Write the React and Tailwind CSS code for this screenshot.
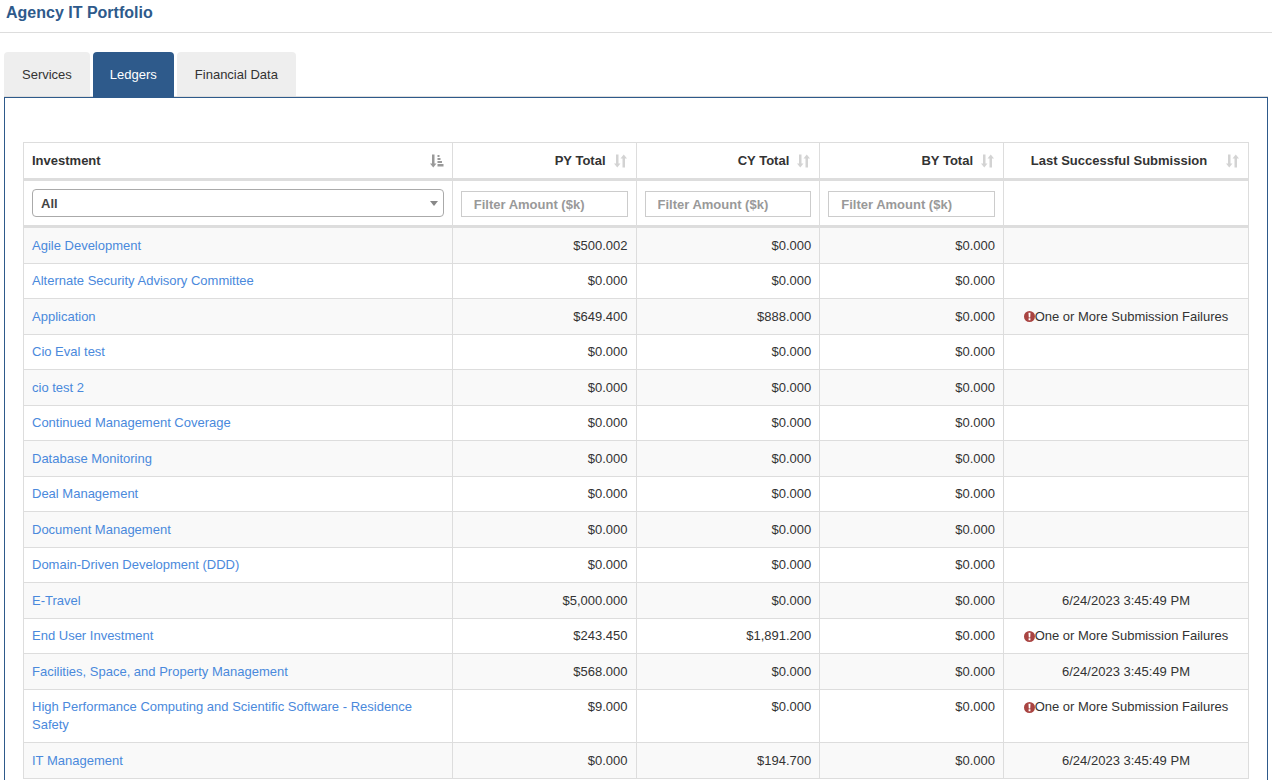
import React, { useState } from "react";

const tabs = ["Services", "Ledgers", "Financial Data"];

const FAILED = "failed";
const SUBMITTED = "6/24/2023 3:45:49 PM";

const investments = [
  { name: "Agile Development", py: "$500.002", cy: "$0.000", by: "$0.000" },
  { name: "Alternate Security Advisory Committee", py: "$0.000", cy: "$0.000", by: "$0.000" },
  { name: "Application", py: "$649.400", cy: "$888.000", by: "$0.000", submission: FAILED },
  { name: "Cio Eval test", py: "$0.000", cy: "$0.000", by: "$0.000" },
  { name: "cio test 2", py: "$0.000", cy: "$0.000", by: "$0.000" },
  { name: "Continued Management Coverage", py: "$0.000", cy: "$0.000", by: "$0.000" },
  { name: "Database Monitoring", py: "$0.000", cy: "$0.000", by: "$0.000" },
  { name: "Deal Management", py: "$0.000", cy: "$0.000", by: "$0.000" },
  { name: "Document Management", py: "$0.000", cy: "$0.000", by: "$0.000" },
  { name: "Domain-Driven Development (DDD)", py: "$0.000", cy: "$0.000", by: "$0.000" },
  { name: "E-Travel", py: "$5,000.000", cy: "$0.000", by: "$0.000", submission: SUBMITTED },
  { name: "End User Investment", py: "$243.450", cy: "$1,891.200", by: "$0.000", submission: FAILED },
  { name: "Facilities, Space, and Property Management", py: "$568.000", cy: "$0.000", by: "$0.000", submission: SUBMITTED },
  {
    name: "High Performance Computing and Scientific Software - Residence Safety",
    py: "$9.000",
    cy: "$0.000",
    by: "$0.000",
    submission: FAILED,
  },
  { name: "IT Management", py: "$0.000", cy: "$194.700", by: "$0.000", submission: SUBMITTED },
];

const amountColumns = ["PY Total", "CY Total", "BY Total"];

function SortIcon() {
  return (
    <svg viewBox="0 0 14 14" className="size-[14px] shrink-0 fill-[#d3d3d3]" aria-hidden="true">
      <path d="M2 0.5h2.5v9h2L3.25 13.5 0 9.5h2z" />
      <path d="M8.5 13.5H11v-9h2L9.75 0.5 6.5 4.5h2z" />
    </svg>
  );
}

// arrow with growing bars, for the column that is sorted
function SortedIcon() {
  return (
    <svg viewBox="0 0 14 14" className="size-[14px] shrink-0 fill-[#999]" aria-hidden="true">
      <path d="M2 0.5h2.5v9h2L3.25 13.5 0 9.5h2z" />
      <path d="M7.5 1h2v2h-2zM7.5 4h3v2h-3zM7.5 7h4.5v2H7.500zM7.500 10h6v2.500h-6z" />
    </svg>
  );
}

function FailureIcon() {
  return (
    <svg viewBox="0 0 12 12" className="size-[11px] shrink-0" aria-hidden="true">
      <circle cx="6" cy="6" r="6" fill="#a94442" />
      <path d="M4.900 2h2.200l-.3 5H5.200zM5 8h2v2H5z" fill="#fff" />
    </svg>
  );
}

function App() {
  const [tab, setTab] = useState("Ledgers");
  const [selected, setSelected] = useState("All");

  const rows = investments.filter((i) => selected === "All" || i.name === selected);

  return (
    <div className="bg-white font-['Liberation_Sans',Arial,sans-serif] text-[13px] leading-[19px] text-[#333]">
      <h1 className="h-[33px] border-b border-[#ddd] px-1.5 pt-[3px] text-base leading-5 font-bold text-[#2e5a8b]">
        Agency IT Portfolio
      </h1>

      <div className="px-1 pt-[19px]">
        <div role="tablist" className="flex gap-[3px] border-b border-[#ddd]">
          {tabs.map((name) => (
            <button
              key={name}
              type="button"
              role="tab"
              aria-selected={tab === name}
              onClick={() => setTab(name)}
              className={
                tab === name
                  ? "-mb-px h-[45px] rounded-t bg-[#2e5a8b] px-[17px] text-white"
                  : "h-11 rounded-t bg-[#eee] px-[18px] text-[#333]"
              }
            >
              {name}
            </button>
          ))}
        </div>

        <div role="tabpanel" className="border border-[#2e5a8b] px-[18px] pt-11 pb-11">
          <table className="w-full table-fixed border-separate border-spacing-0 border-t border-l border-[#ddd]">
            <colgroup>
              <col className="w-[35%]" />
              <col className="w-[15%]" />
              <col className="w-[15%]" />
              <col className="w-[15%]" />
              <col className="w-[20%]" />
            </colgroup>
            <thead>
              <tr>
                <th className="border-r border-b-3 border-[#ddd] p-2">
                  <button type="button" className="flex w-full items-center justify-between font-bold">
                    Investment
                    <SortedIcon />
                  </button>
                </th>
                {amountColumns.map((name) => (
                  <th key={name} className="border-r border-b-3 border-[#ddd] p-2">
                    <button type="button" className="flex w-full items-center justify-end gap-2 font-bold">
                      {name}
                      <SortIcon />
                    </button>
                  </th>
                ))}
                <th className="border-r border-b-3 border-[#ddd] p-2">
                  <button type="button" className="flex w-full items-center font-bold">
                    <span className="flex-1">Last Successful Submission</span>
                    <SortIcon />
                  </button>
                </th>
              </tr>
              <tr>
                <td className="border-r border-b-3 border-[#ddd] p-2">
                  <div className="relative">
                    <select
                      aria-label="Investment"
                      value={selected}
                      onChange={(e) => setSelected(e.target.value)}
                      className="block h-7 w-full appearance-none rounded border border-[#aaa] bg-white px-2 font-bold text-[#444]"
                    >
                      <option>All</option>
                      {investments.map((i) => (
                        <option key={i.name}>{i.name}</option>
                      ))}
                    </select>
                    <svg
                      viewBox="0 0 8 5"
                      className="pointer-events-none absolute top-3 right-1.5 h-[5px] w-2 fill-[#888]"
                      aria-hidden="true"
                    >
                      <path d="M0 0h8L4 5z" />
                    </svg>
                  </div>
                </td>
                {amountColumns.map((name) => (
                  <td key={name} className="border-r border-b-3 border-[#ddd] p-2 align-bottom">
                    <input
                      type="text"
                      aria-label={name}
                      placeholder="Filter Amount ($k)"
                      className="block h-[26px] w-full border border-[#ccc] px-3 font-bold placeholder:text-[#999]"
                    />
                  </td>
                ))}
                <td className="border-r border-b-3 border-[#ddd] p-2" />
              </tr>
            </thead>
            <tbody>
              {rows.map((row) => (
                <tr key={row.name} className="align-top odd:bg-[#f9f9f9] odd:leading-[19px] even:leading-[18px]">
                  <td className="border-r border-b border-[#ddd] p-2">
                    <a href="#" className="text-[#4a89dc] hover:underline">
                      {row.name}
                    </a>
                  </td>
                  <td className="border-r border-b border-[#ddd] p-2 text-right">{row.py}</td>
                  <td className="border-r border-b border-[#ddd] p-2 text-right">{row.cy}</td>
                  <td className="border-r border-b border-[#ddd] p-2 text-right">{row.by}</td>
                  <td className="border-r border-b border-[#ddd] p-2 text-center">
                    {row.submission === FAILED ? (
                      <span className="flex items-center justify-center">
                        <FailureIcon />
                        One or More Submission Failures
                      </span>
                    ) : (
                      row.submission
                    )}
                  </td>
                </tr>
              ))}
            </tbody>
          </table>
        </div>
      </div>
    </div>
  );
}

export default App;
